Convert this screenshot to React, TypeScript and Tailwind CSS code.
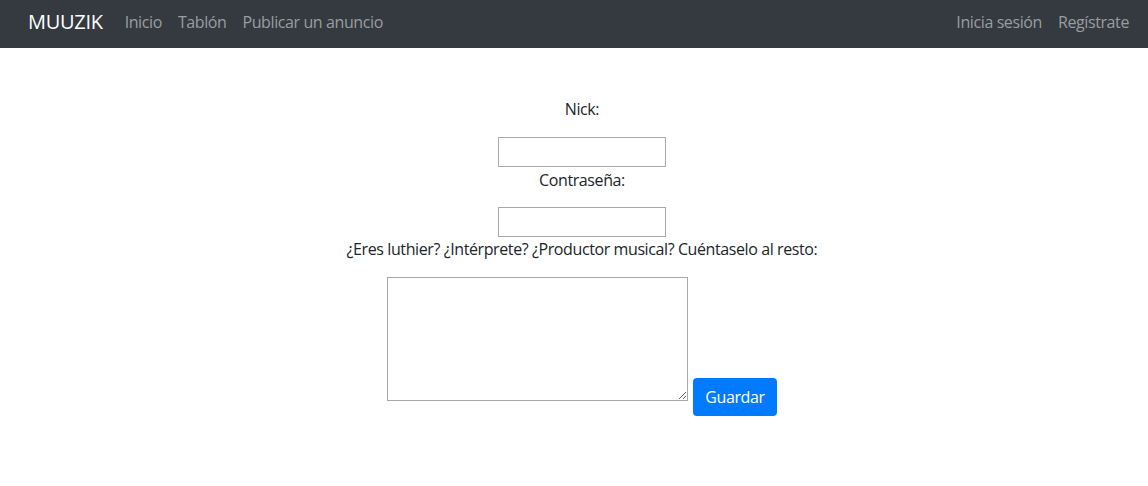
export default function App() {
  const font = { fontFamily: '"Open Sans", "Noto Sans", sans-serif' };
  return (
    <div className="min-h-screen bg-white text-[#212529] text-base" style={font}>
      {/* Navbar */}
      <nav className="h-12 bg-[#343a40] flex items-center justify-between pl-7 pr-[19px] pb-1">
        <div className="flex items-center">
          <a className="text-white text-xl tracking-[-0.3px] mr-[22px]">MUUZIK</a>
          <a className="text-[#9a9da0] text-base tracking-[-0.4px] mr-4">Inicio</a>
          <a className="text-[#9a9da0] text-base tracking-[-0.4px] mr-4">Tablón</a>
          <a className="text-[#9a9da0] text-base tracking-[-0.4px]">Publicar un anuncio</a>
        </div>
        <div className="flex items-center">
          <a className="text-[#9a9da0] text-base tracking-[-0.4px] mr-4">Inicia sesión</a>
          <a className="text-[#9a9da0] text-base tracking-[-0.4px]">Regístrate</a>
        </div>
      </nav>

      {/* Form */}
      <form className="flex flex-col items-center pt-[49px] pl-4 tracking-[-0.4px]">
        <label className="leading-6 mb-4">Nick:</label>
        <input type="text" className="w-[168px] h-[30px] border border-[#a9a9a9] outline-none px-1" />
        <label className="leading-6 mt-px mb-[15px]">Contraseña:</label>
        <input type="password" className="w-[168px] h-[30px] border border-[#a9a9a9] outline-none px-1" />
        <label className="leading-6 mb-4">¿Eres luthier? ¿Intérprete? ¿Productor musical? Cuéntaselo al resto:</label>
        <div className="flex items-end">
          <textarea className="w-[301px] h-[124px] border border-[#a9a9a9] outline-none p-1 block" />
          <button
            type="button"
            className="ml-[5px] mb-[-15px] h-[38px] px-3 rounded bg-[#007bff] text-white leading-6"
          >
            Guardar
          </button>
        </div>
      </form>
    </div>
  );
}
